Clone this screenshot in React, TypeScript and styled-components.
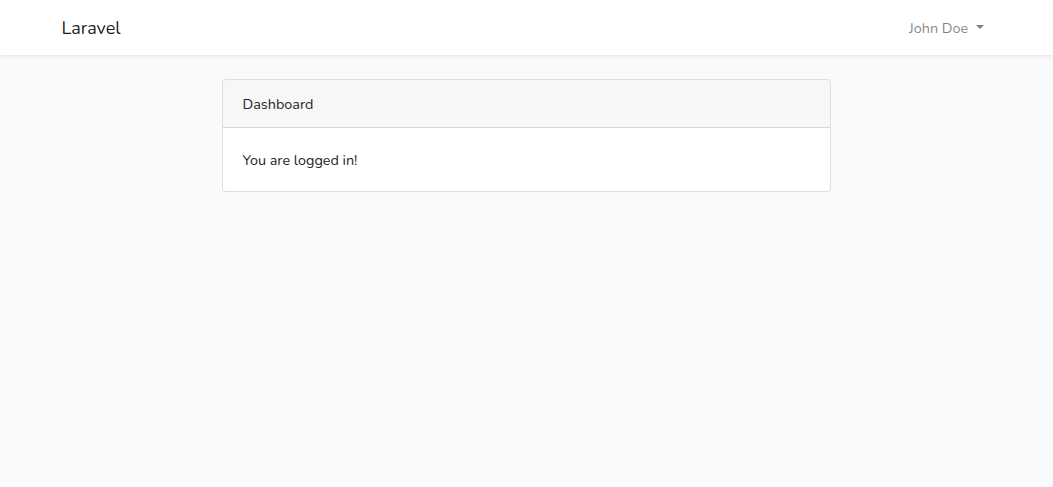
import React from 'react';
import styled, { createGlobalStyle } from 'styled-components';

const GlobalStyle = createGlobalStyle`
  *, *::before, *::after {
    box-sizing: border-box;
  }
  body {
    margin: 0;
    font-family: Nunito, Lato, "Open Sans", sans-serif;
    font-size: 14.4px;
    line-height: 1.6;
    color: #212529;
    background-color: #f8fafc;
  }
`;

const Navbar = styled.nav`
  background: #fff;
  padding: 8px 16px;
  box-shadow: 0 2px 4px rgba(0, 0, 0, 0.075);
  position: relative;
`;

const Container = styled.div`
  width: 100%;
  max-width: 960px;
  margin: 0 auto;
  padding: 0 15px;
`;

const NavContainer = styled(Container)`
  display: flex;
  align-items: center;
  justify-content: space-between;
  padding: 0;
  max-width: 930px;
`;

// text sits 1px lower than the font's own metrics give, so padding is shifted
const Brand = styled.a`
  color: rgba(0, 0, 0, 0.9);
  font-size: 18px;
  padding: 6px 0 4px;
  margin-right: 16px;
  text-decoration: none;
  white-space: nowrap;
`;

const NavLink = styled.a`
  color: rgba(0, 0, 0, 0.5);
  padding: 9px 8px 7px;
  text-decoration: none;
  display: block;
`;

const Caret = styled.span`
  display: inline-block;
  margin-left: 0.255em;
  vertical-align: 0.255em;
  border-top: 0.3em solid;
  border-right: 0.3em solid transparent;
  border-left: 0.3em solid transparent;
`;

const Main = styled.main`
  padding: 24px 0;
`;

const Row = styled.div`
  display: flex;
  justify-content: center;
  margin: 0 -15px;
`;

const Col = styled.div`
  flex: 0 0 66.666667%;
  max-width: 66.666667%;
  padding: 0 15px;
`;

const Card = styled.div`
  background: #fff;
  border: 1px solid rgba(0, 0, 0, 0.125);
  border-radius: 4px;
  overflow: hidden;
`;

const CardHeader = styled.div`
  padding: 13px 20px 11px;
  background: rgba(0, 0, 0, 0.03);
  border-bottom: 1px solid rgba(0, 0, 0, 0.125);
`;

const CardBody = styled.div`
  padding: 21px 20px 19px;
`;

const App: React.FC = () => {
  return (
    <React.Fragment>
      <GlobalStyle />
      <Navbar>
        <NavContainer>
          <Brand href="#">Laravel</Brand>
          <NavLink href="#">
            John Doe <Caret />
          </NavLink>
        </NavContainer>
      </Navbar>
      <Main>
        <Container>
          <Row>
            <Col>
              <Card>
                <CardHeader>Dashboard</CardHeader>
                <CardBody>You are logged in!</CardBody>
              </Card>
            </Col>
          </Row>
        </Container>
      </Main>
    </React.Fragment>
  );
};

export default App;
